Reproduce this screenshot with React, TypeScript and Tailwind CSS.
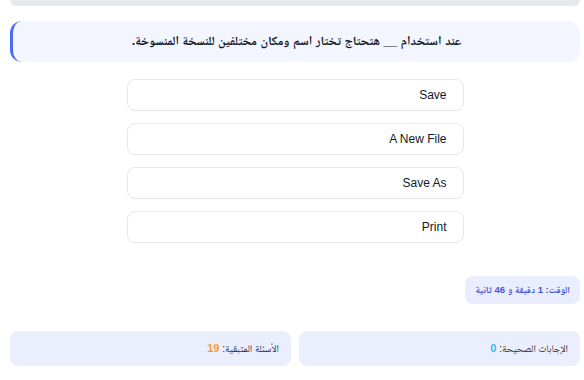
import React from "react";

const options = ["Save", "A New File", "Save As", "Print"];

export default function App() {
  return (
    <div
      dir="rtl"
      className="w-[584px] h-[380px] bg-white overflow-hidden pl-[10px] pr-[4px]"
      style={{ fontFamily: '"Liberation Sans", "Noto Naskh Arabic", sans-serif' }}
    >
      {/* progress bar (scrolled) */}
      <div className="h-[6px] w-full rounded-b-full bg-[#e6e9ee]" />

      {/* question */}
      <div className="mt-[15px] h-[41px] flex items-center justify-center rounded-xl bg-[#f4f6ff] border-l-[3px] border-[#4d6af5]">
        <p className="text-[12.5px] font-bold text-[#111827]">
          عند استخدام __ هتحتاج تختار اسم ومكان مختلفين للنسخة المنسوخة.
        </p>
      </div>

      {/* options */}
      <div className="mt-[17px] flex flex-col items-center gap-[12px]">
        {options.map((o) => (
          <button
            key={o}
            className="w-[337px] h-[32px] rounded-lg border border-[#e5e7eb] bg-white px-[16px] text-right text-[12px] text-[#111827]"
          >
            {o}
          </button>
        ))}
      </div>

      {/* timer */}
      <div className="mt-[33px] flex">
        <div className="h-[28px] px-[10px] flex items-center rounded-lg bg-[#eaedfd] text-[9.5px] font-bold text-[#4353d6]">
          الوقت: 1 دقيقة و 46 ثانية
        </div>
      </div>

      {/* stats */}
      <div className="mt-[27px] grid grid-cols-2 gap-[8px]">
        <div className="h-[35px] px-[12px] flex items-center rounded-lg bg-[#ebeefd] text-[10px] text-[#1f2937]">
          الإجابات الصحيحة:&nbsp;<span className="font-bold text-[11px] text-[#38bdf8]">0</span>
        </div>
        <div className="h-[35px] px-[12px] flex items-center rounded-lg bg-[#ebeefd] text-[10px] text-[#1f2937]">
          الأسئلة المتبقية:&nbsp;<span className="font-bold text-[11px] text-[#f59a3c]">19</span>
        </div>
      </div>
    </div>
  );
}
